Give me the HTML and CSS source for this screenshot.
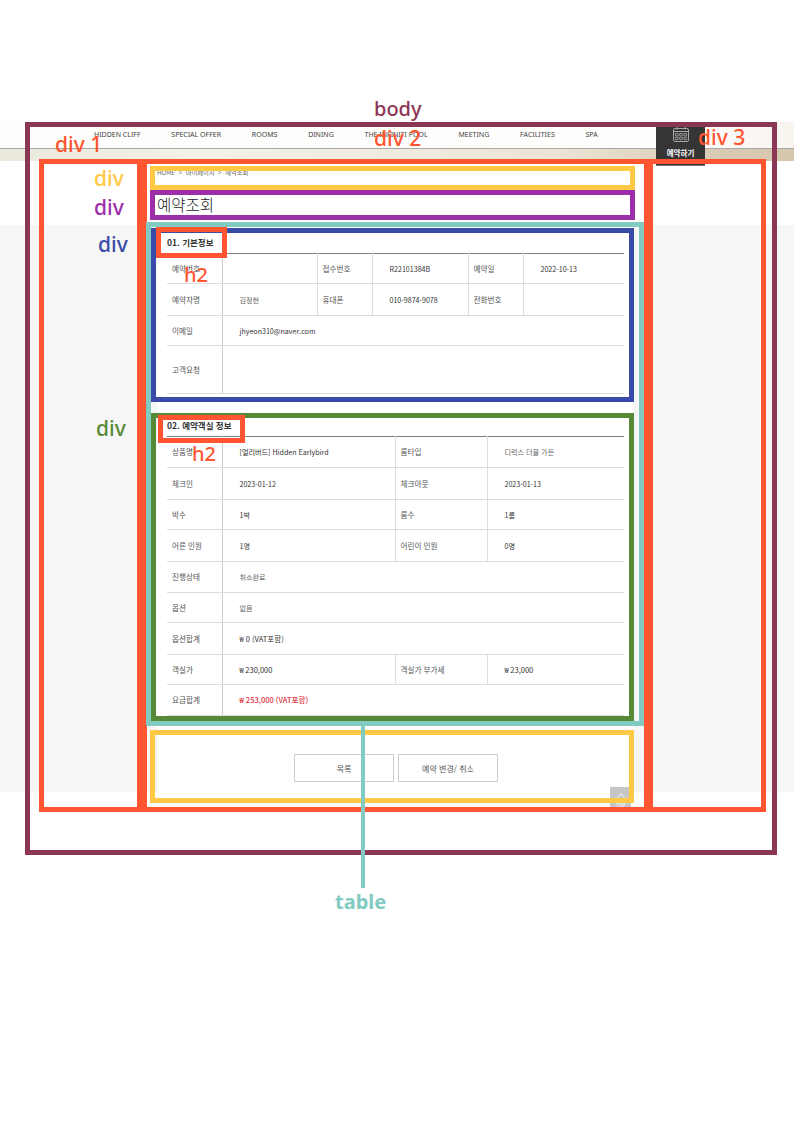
FILE: index.html
```html
<!DOCTYPE html>
<html lang="ko">
<head>
    <meta charset="UTF-8">
    <meta name="viewport" content="width=device-width, initial-scale=1.0">
    <title>예약조회</title>
    <link rel="stylesheet" href="styles.css">
</head>
<body>
    <header class="top">
        <nav class="gnb">
            <a href="#">HIDDEN CLIFF</a>
            <a href="#">SPECIAL OFFER</a>
            <a href="#">ROOMS</a>
            <a href="#">DINING</a>
            <a href="#">THE INFINITI POOL</a>
            <a href="#">MEETING</a>
            <a href="#">FACILITIES</a>
            <a href="#">SPA</a>
        </nav>
        <a class="book" href="#">
            <svg class="book-icon" viewBox="0 0 16 15" width="16" height="15" fill="none" stroke="#a8a8a8" stroke-width="1">
                <rect x="0.5" y="1.5" width="15" height="13" rx="1.5"/>
                <path d="M0.5 4.5H15.5M4 0V2.5M12 0V2.5"/>
                <path d="M2.5 6.5h2.6v2.4h-2.6zM6.7 6.5h2.6v2.4h-2.6zM10.9 6.5h2.6v2.4h-2.6zM2.5 10.2h2.6v2.4h-2.6zM6.7 10.2h2.6v2.4h-2.6zM10.9 10.2h2.6v2.4h-2.6z" stroke-width="0.8"/>
            </svg>
            <span>예약하기</span>
        </a>
    </header>
    <div class="band"></div>

    <div class="sub-head">
        <p class="crumb">HOME &nbsp;&gt;&nbsp; 마이페이지 &nbsp;&gt;&nbsp; 예약조회</p>
        <h1>예약조회</h1>
    </div>

    <main class="gray">
        <div class="col">
            <section class="block">
                <h2>01. 기본정보</h2>
                <table class="info info-a">
                    <colgroup><col class="a1"><col class="a2"><col class="a3"><col class="a4"><col class="a5"><col class="a6"></colgroup>
                    <tr class="h30">
                        <th>예약번호</th><td></td><th>접수번호</th><td>R22101384B</td><th>예약일</th><td>2022-10-13</td>
                    </tr>
                    <tr class="h32">
                        <th>예약자명</th><td class="dim">김정현</td><th>휴대폰</th><td>010-9874-9078</td><th>전화번호</th><td></td>
                    </tr>
                    <tr class="h30">
                        <th>이메일</th><td colspan="5">jhyeon310@naver.com</td>
                    </tr>
                    <tr class="h48">
                        <th>고객요청</th><td colspan="5"></td>
                    </tr>
                </table>
            </section>

            <section class="block block-b">
                <h2>02. 예약객실 정보</h2>
                <table class="info info-b">
                    <colgroup><col class="b1"><col class="b2"><col class="b3"><col class="b4"></colgroup>
                    <tr class="h31">
                        <th>상품명</th><td>[얼리버드] Hidden Earlybird</td><th>룸타입</th><td class="dim">디럭스 더블 가든</td>
                    </tr>
                    <tr class="h32">
                        <th>체크인</th><td>2023-01-12</td><th>체크아웃</th><td>2023-01-13</td>
                    </tr>
                    <tr class="h30">
                        <th>박수</th><td>1박</td><th>룸수</th><td>1룸</td>
                    </tr>
                    <tr class="h32">
                        <th>어른 인원</th><td>1명</td><th>어린이 인원</th><td>0명</td>
                    </tr>
                    <tr class="h31">
                        <th>진행상태</th><td colspan="3" class="dim">취소완료</td>
                    </tr>
                    <tr class="h30">
                        <th>옵션</th><td colspan="3" class="dim">없음</td>
                    </tr>
                    <tr class="h32">
                        <th>옵션합계</th><td colspan="3" class="money">₩ 0 (VAT포함)</td>
                    </tr>
                    <tr class="h30">
                        <th>객실가</th><td class="money">₩ 230,000</td><th>객실가 부가세</th><td class="money">₩ 23,000</td>
                    </tr>
                    <tr class="h31">
                        <th>요금합계</th><td colspan="3" class="money total">₩ 253,000 (VAT포함)</td>
                    </tr>
                </table>
            </section>

            <div class="btns">
                <a class="btn" href="#">목록</a>
                <a class="btn" href="#">예약 변경/ 취소</a>
            </div>
            <a class="to-top" href="#">
                <svg viewBox="0 0 10 6" width="10" height="6" fill="none" stroke="#fff" stroke-width="1"><path d="M0.5 5.5L5 1L9.5 5.5"/></svg>
                <span>TOP</span>
            </a>
        </div>
    </main>

    <!-- annotation boxes drawn over the page -->
    <div class="mark m-body"></div>
    <div class="mark m-div1"></div>
    <div class="mark m-div2"></div>
    <div class="mark m-div3"></div>
    <div class="mark m-crumb"></div>
    <div class="mark m-title"></div>
    <div class="mark m-table"></div>
    <div class="mark m-sec1"></div>
    <div class="mark m-sec2"></div>
    <div class="mark m-h2a"></div>
    <div class="mark m-h2b"></div>
    <div class="mark m-btns"></div>
    <div class="m-line"></div>

    <span class="tag t-body">body</span>
    <span class="tag t-div1">div 1</span>
    <span class="tag t-div2">div 2</span>
    <span class="tag t-div3">div 3</span>
    <span class="tag t-crumb">div</span>
    <span class="tag t-title">div</span>
    <span class="tag t-sec1">div</span>
    <span class="tag t-sec2">div</span>
    <span class="tag t-h2a">h2</span>
    <span class="tag t-h2b">h2</span>
    <span class="tag t-table">table</span>
</body>
</html>
```

FILE: styles.css
```css
* { box-sizing: border-box; }
body { margin: 0; min-height: 1123px; position: relative; overflow-x: hidden; font-family: "Noto Sans CJK KR", "Noto Sans", sans-serif; font-size: 8px; color: #333; background: #fff; }
a { color: inherit; text-decoration: none; }

/* header */
.top { position: relative; margin-top: 122px; height: 27px; padding-top: 5px; border-bottom: 1px solid #a8a8a8; background: linear-gradient(90deg, #fdfdfb, #fefefd 85%, #f8f4ee); }
.gnb { display: flex; gap: 30.8px; padding: 2px 0 0 94px; font-family: "Noto Sans", sans-serif; font-size: 7px; line-height: 11px; color: #444; }
.book { position: absolute; left: 656px; top: 5px; width: 49px; height: 38.5px; display: flex; flex-direction: column; align-items: center; background: #353535; border-bottom: 1px solid #777; color: #fff; font-size: 7.5px; font-weight: 700; line-height: 10px; }
.book-icon { display: block; margin-bottom: 6px; }
.band { height: 12px; background: linear-gradient(90deg, #ebe8dc, #f4f2e9 25%, #ece5d6 70%, #d9cab3 90%, #d6c6ae); }

/* title area */
.sub-head { height: 64px; padding: 7px 0 0 157px; }
.crumb { margin: 0; font-size: 6.3px; line-height: 9px; color: #666; }
h1 { margin: 17px 0 0; font-size: 15.5px; font-weight: 300; line-height: 20px; color: #222; }

/* content */
.gray { height: 567px; background: #f6f6f6; }
.col { position: relative; width: 477px; height: 582px; margin-left: 157px; padding: 0 10px; background: #fff; }
.block h2 { height: 28px; margin: 0; padding-top: 11px; font-size: 8.5px; font-weight: 700; line-height: 12px; color: #333; }
.block-b { margin-top: 14px; }

.info { width: 457px; table-layout: fixed; border-collapse: collapse; border-top: 1px solid #808080; }
.info th, .info td { padding: 0 0 0 5px; border-bottom: 1px solid #ddd; border-left: 1px solid #ddd; font-weight: 400; line-height: 10px; text-align: left; }
.info th { font-size: 7.6px; color: #555; }
.info td { padding-left: 17px; font-size: 7.1px; color: #333; }
.info tr > :first-child { border-left: 0; }
.info tr > th:first-child + td { border-left-color: #ccc; }
.info .dim { color: #666; }
.info .money { font-size: 7.5px; }
.info .total { color: #e0353f; font-weight: 500; }

.h30 { height: 30px; }
.h31 { height: 31px; }
.h32 { height: 32px; }
.h48 { height: 48px; }

.a1, .b1 { width: 55px; }
.a2 { width: 95px; }
.a3, .a5 { width: 55px; }
.a4 { width: 96px; }
.a6 { width: 101px; }
.b2 { width: 173px; }
.b3 { width: 92px; }
.b4 { width: 137px; }

.btns { display: flex; gap: 4px; margin: 38px 0 0 127px; }
.btn { width: 100px; height: 28px; display: flex; align-items: center; justify-content: center; border: 1px solid #ccc; background: #fff; color: #555; }
.to-top { position: absolute; left: 453px; top: 562px; width: 21px; height: 21px; display: flex; flex-direction: column; align-items: center; gap: 3px; padding-top: 6px; background: #c6c6c6; color: #fff; font-size: 5px; line-height: 7px; }

/* annotation boxes */
.mark { position: absolute; border: 5px solid; }
.m-body { left: 25px; top: 122px; width: 752px; height: 733px; border-color: #8b3654; }
.m-div1 { left: 39px; top: 159px; width: 103px; height: 653px; border-color: #ff5530; }
.m-div2 { left: 142px; top: 159px; width: 507px; height: 653px; border-color: #ff5530; }
.m-div3 { left: 648px; top: 159px; width: 118px; height: 653px; border-color: #ff5530; }
.m-crumb { left: 150px; top: 166px; width: 485px; height: 24px; border-color: #ffc845; }
.m-title { left: 150px; top: 190px; width: 485px; height: 30px; border-color: #9c2eaa; }
.m-table { left: 146px; top: 222px; width: 498px; height: 504px; border-color: #82cbc2; }
.m-sec1 { left: 151px; top: 228px; width: 483px; height: 174px; border-color: #3a4aa8; }
.m-sec2 { left: 151px; top: 413px; width: 483px; height: 308px; border-color: #568a36; }
.m-h2a { left: 156px; top: 227px; width: 71px; height: 31px; border-color: #ff5530; }
.m-h2b { left: 158px; top: 415px; width: 87px; height: 28px; border-color: #ff5530; }
.m-btns { left: 150px; top: 730px; width: 484px; height: 73px; border-color: #ffc845; }
.m-line { position: absolute; left: 361px; top: 726px; width: 4px; height: 162px; background: #82cbc2; }

/* annotation labels */
.tag { position: absolute; font-family: "Noto Sans", sans-serif; font-size: 21px; font-weight: 500; line-height: 24px; white-space: nowrap; }
.t-body { left: 374px; top: 97px; font-size: 20px; color: #8b3654; }
.t-div1 { left: 55px; top: 132px; color: #ff5530; }
.t-div2 { left: 374px; top: 126px; color: #ff5530; }
.t-div3 { left: 698px; top: 125px; color: #ff5530; }
.t-crumb { left: 94px; top: 166px; color: #ffc845; }
.t-title { left: 94px; top: 195px; color: #9c2eaa; }
.t-sec1 { left: 98px; top: 232px; color: #3a4aa8; }
.t-sec2 { left: 96px; top: 416px; color: #568a36; }
.t-h2a { left: 184px; top: 263px; font-size: 20px; color: #ff5530; }
.t-h2b { left: 192px; top: 442px; font-size: 20px; color: #ff5530; }
.t-table { left: 335px; top: 890px; font-size: 20px; color: #82cbc2; font-weight: 700; }
```
